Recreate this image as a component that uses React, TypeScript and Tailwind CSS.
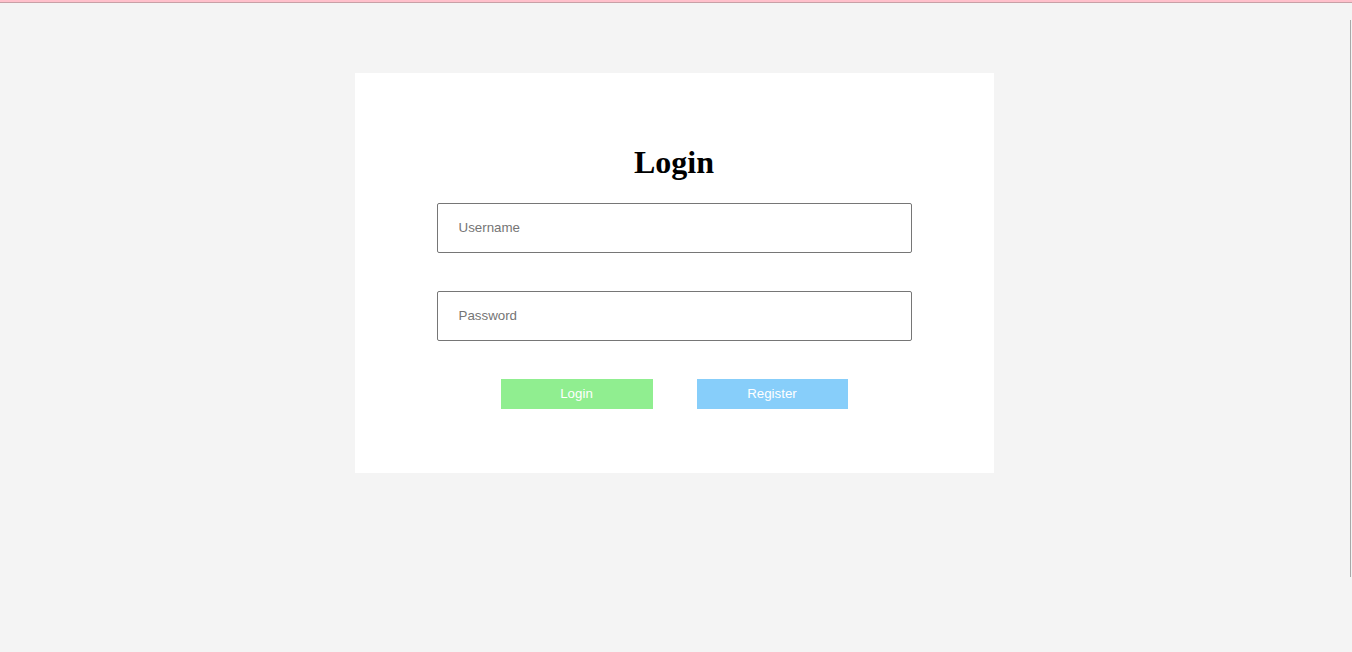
export default function App() {
  return (
    <div className="relative min-h-[652px] w-full bg-[#f4f4f4] font-['Liberation_Sans',Arial,sans-serif]">
      {/* top strip */}
      <div className="h-[2px] bg-[#ffc0cb]" />
      <div className="h-px bg-[#c8a0a6]" />

      {/* thin line on the right edge */}
      <div className="absolute right-[1px] top-[20px] h-[557px] w-px bg-[#a8a8a8]" />

      <div className="flex justify-center pt-[70px] pr-[4px]">
        <div className="w-[639px] h-[400px] bg-white px-[82px] pt-[69px]">
          <h1 className="text-center font-['Liberation_Serif','Times_New_Roman',serif] text-[32px] font-bold leading-[40px] text-black">
            Login
          </h1>

          <div className="mt-[21px] flex flex-col gap-[38px]">
            <input
              type="text"
              placeholder="Username"
              className="h-[50px] w-full rounded-[2px] border border-[#767676] px-[21px] pb-px text-[13.33px] text-black placeholder:text-[#757575] outline-none"
            />
            <input
              type="password"
              placeholder="Password"
              className="h-[50px] w-full rounded-[2px] border border-[#767676] px-[21px] pb-px text-[13.33px] text-black placeholder:text-[#757575] outline-none"
            />
          </div>

          <div className="mt-[38px] flex justify-center gap-[44px]">
            <button className="h-[30px] w-[152px] bg-[#90ee90] text-[13.33px] text-white">
              Login
            </button>
            <button className="h-[30px] w-[151px] bg-[#87cefa] text-[13.33px] text-white">
              Register
            </button>
          </div>
        </div>
      </div>
    </div>
  );
}
